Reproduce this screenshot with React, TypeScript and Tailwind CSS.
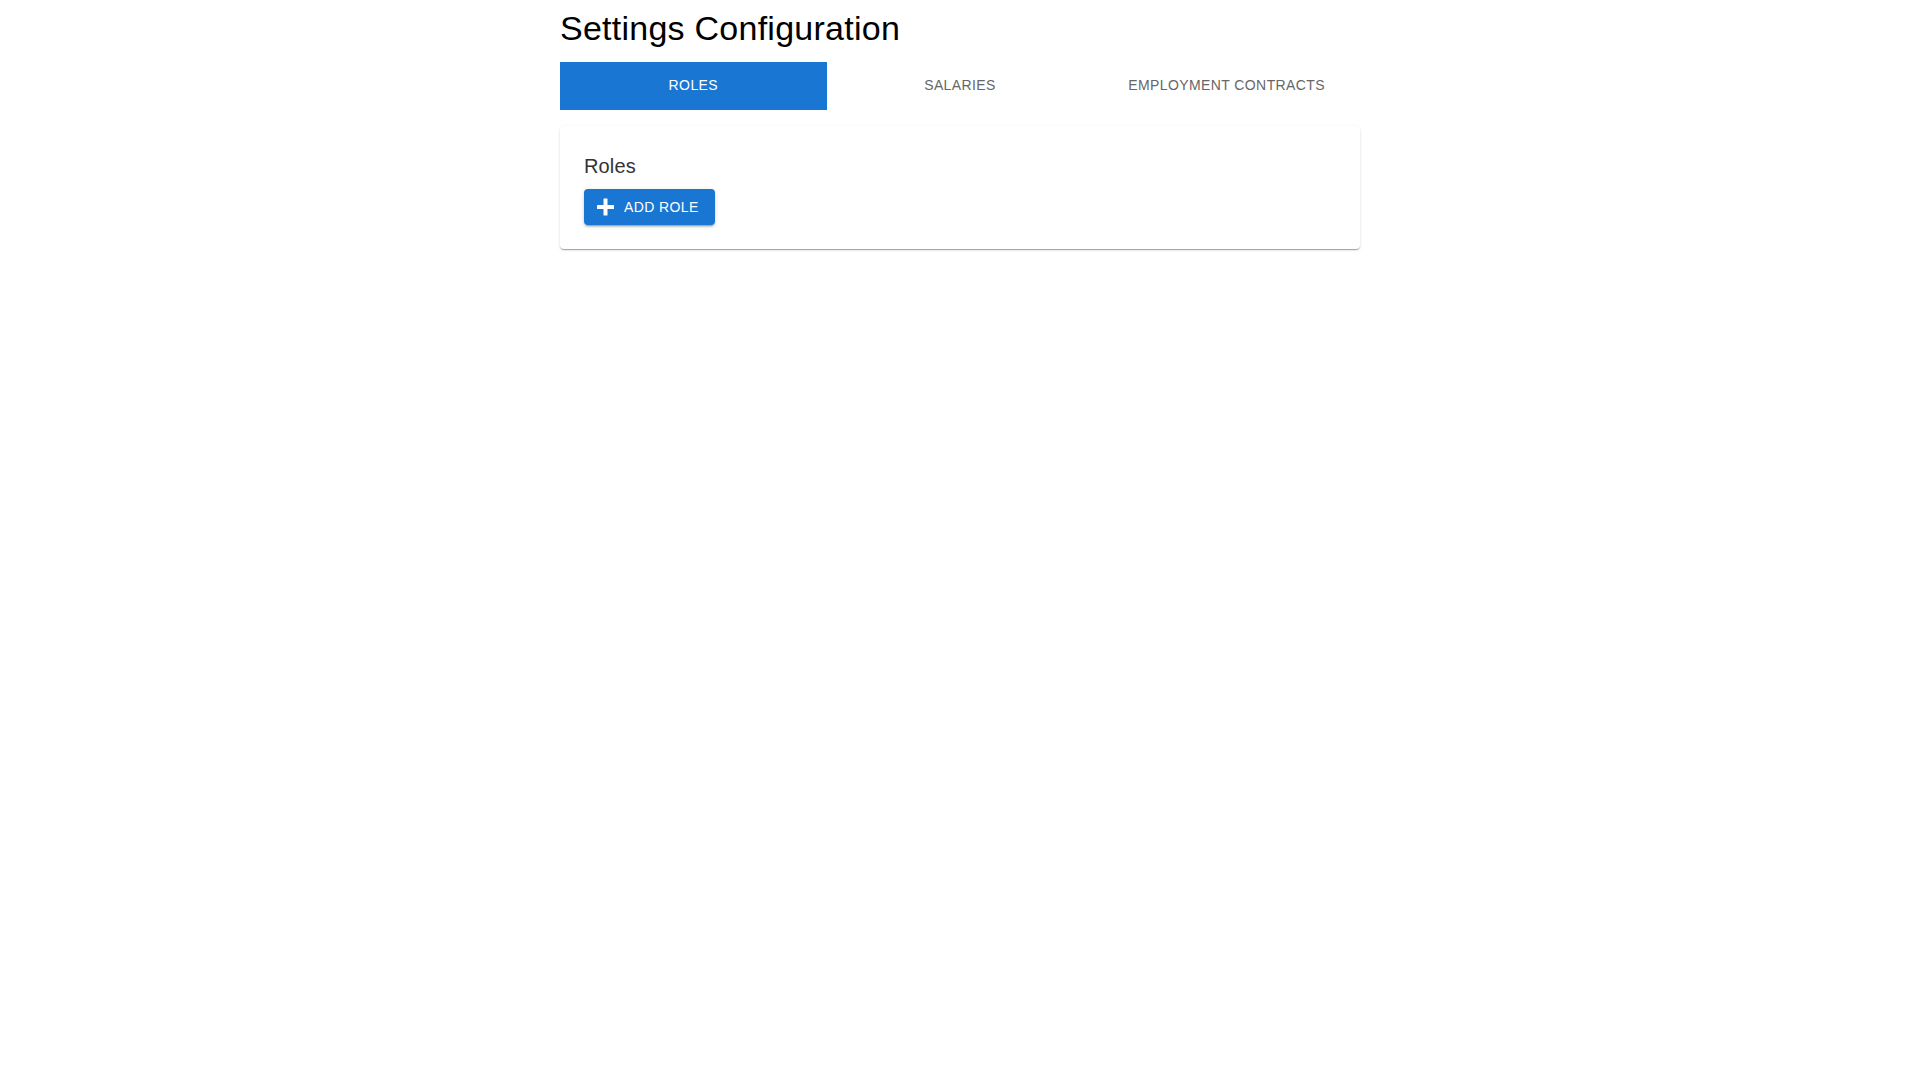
import React, { useState } from 'react';

const tabs = ['Roles', 'Salaries', 'Employment Contracts'];

const AddIcon = () => (
  <svg viewBox="0 0 20 20" className="w-5 h-5 fill-current" aria-hidden="true">
    <rect x="7.5" y="1.5" width="4" height="17" rx="0.5" />
    <rect x="1" y="8" width="17" height="4" rx="0.5" />
  </svg>
);

const App = () => {
  const [active, setActive] = useState(0);

  return (
    <div
      className="min-h-screen bg-white text-black"
      style={{ fontFamily: '"Liberation Sans", Arial, sans-serif' }}
    >
      <div className="w-[800px] mx-auto">
        <h1 className="text-[34px] leading-[42px] font-normal pt-[7px] mb-[13px] tracking-[0.25px]">
          Settings Configuration
        </h1>

        <div className="grid grid-cols-3">
          {tabs.map((tab, i) => (
            <button
              key={tab}
              onClick={() => setActive(i)}
              className={
                i === active
                  ? 'h-12 pb-[2px] bg-[#1976d2] text-white text-sm font-medium uppercase tracking-[0.4px]'
                  : 'h-12 pb-[2px] bg-white text-[#666666] text-sm font-medium uppercase tracking-[0.4px]'
              }
            >
              {tab}
            </button>
          ))}
        </div>

        <div className="mt-4 bg-white rounded p-6 shadow-[0_2px_1px_-1px_rgba(0,0,0,0.2),0_1px_1px_0_rgba(0,0,0,0.14),0_1px_3px_0_rgba(0,0,0,0.12)]">
          <h2 className="text-xl leading-8 font-normal text-[#333333] mb-[7px] tracking-[0.15px]">
            {tabs[active]}
          </h2>
          <button className="h-9 flex items-center gap-2 pl-[12px] pr-4 bg-[#1976d2] text-white text-sm font-medium uppercase tracking-[0.4px] rounded shadow-[0_3px_1px_-2px_rgba(0,0,0,0.2),0_2px_2px_0_rgba(0,0,0,0.14),0_1px_5px_0_rgba(0,0,0,0.12)]">
            <AddIcon />
            Add Role
          </button>
        </div>
      </div>
    </div>
  );
};

export default App;
